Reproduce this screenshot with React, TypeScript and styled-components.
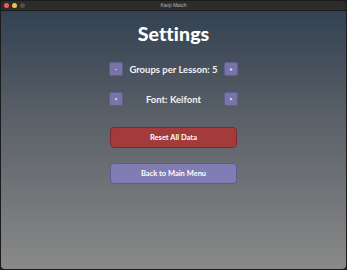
import styled, { createGlobalStyle } from "styled-components";

const GlobalStyle = createGlobalStyle`
	html, body {
		margin: 0;
		padding: 0;
		background: #1e1e1e;
	}
	* {
		box-sizing: border-box;
	}
`;

const settings = {
	groupsPerLesson: 5,
	font: "Keifont",
};

const App = () => {
	return (
		<>
			<GlobalStyle />
			<Window>
				<TitleBar>
					<Lights>
						<Light color="#ed5f57" />
						<Light color="#f4bf4f" />
						<Light color="#4e4e4e" />
					</Lights>
					<WindowTitle>Kanji Match</WindowTitle>
				</TitleBar>

				<Content>
					<Heading>Settings</Heading>

					<OptionRow>
						<StepButton>-</StepButton>
						<OptionLabel>Groups per Lesson: {settings.groupsPerLesson}</OptionLabel>
						<StepButton>+</StepButton>
					</OptionRow>

					<OptionRow>
						<StepButton>&lt;</StepButton>
						<OptionLabel>Font: {settings.font}</OptionLabel>
						<StepButton>&gt;</StepButton>
					</OptionRow>

					<Actions>
						<ActionButton variant="danger">Reset All Data</ActionButton>
						<ActionButton variant="primary">Back to Main Menu</ActionButton>
					</Actions>
				</Content>
			</Window>
		</>
	);
};

const Window = styled.div`
	width: 347px;
	height: 270px;
	display: flex;
	flex-direction: column;
	border-radius: 5px;
	overflow: hidden;
	border: 1px solid #1b1b1b;
	font-family: Lato, "Open Sans", sans-serif;
`;

const TitleBar = styled.div`
	position: relative;
	height: 10px;
	flex-shrink: 0;
	display: flex;
	align-items: center;
	justify-content: center;
	background: #2c2c2c;
	border-bottom: 1px solid #1a1a1a;
`;

const Lights = styled.div`
	position: absolute;
	left: 3px;
	top: 2px;
	display: flex;
	gap: 3px;
`;

interface ILight {
	color: string;
}

const Light = styled.span<ILight>`
	width: 5px;
	height: 5px;
	border-radius: 50%;
	background: ${(props) => props.color};
`;

const WindowTitle = styled.span`
	font-size: 5px;
	color: #b8b8b8;
	font-family: "Liberation Sans", sans-serif;
	line-height: 1;
`;

const Content = styled.div`
	flex: 1;
	display: flex;
	flex-direction: column;
	align-items: center;
	background: linear-gradient(to bottom, #334151 0%, #5d636a 45%, #898989 100%);
	padding-top: 11px;
`;

const Heading = styled.h1`
	margin: 0;
	font-family: Lato, sans-serif;
	font-weight: 900;
	font-size: 19.5px;
	line-height: 23px;
	color: #ffffff;
	letter-spacing: 0.1px;
`;

const OptionRow = styled.div`
	width: 129px;
	display: flex;
	align-items: center;
	justify-content: space-between;
	margin-top: 17px;

	& + & {
		margin-top: 16px;
	}
`;

const StepButton = styled.button`
	width: 14px;
	height: 14px;
	padding: 0;
	border: 1px solid #615d91;
	border-radius: 2px;
	background: #7873a9;
	color: #ffffff;
	font-family: Lato, sans-serif;
	font-weight: 700;
	font-size: 6px;
	line-height: 1;
	display: flex;
	align-items: center;
	justify-content: center;
`;

const OptionLabel = styled.span`
	font-family: Lato, sans-serif;
	font-weight: 700;
	font-size: 9.5px;
	color: #f2f2f2;
	white-space: nowrap;
`;

const Actions = styled.div`
	display: flex;
	flex-direction: column;
	gap: 15px;
	margin-top: 21px;
`;

interface IActionButton {
	variant: "danger" | "primary";
}

const ActionButton = styled.button<IActionButton>`
	width: 127px;
	height: 21px;
	padding: 0;
	border-radius: 4px;
	border: 1px solid ${(props) => (props.variant === "danger" ? "#7c2a2a" : "#5f5b90")};
	background: ${(props) => (props.variant === "danger" ? "#a43b3b" : "#807cb4")};
	color: #ffffff;
	font-family: Lato, sans-serif;
	font-weight: 700;
	font-size: 7.5px;
`;

export default App;
